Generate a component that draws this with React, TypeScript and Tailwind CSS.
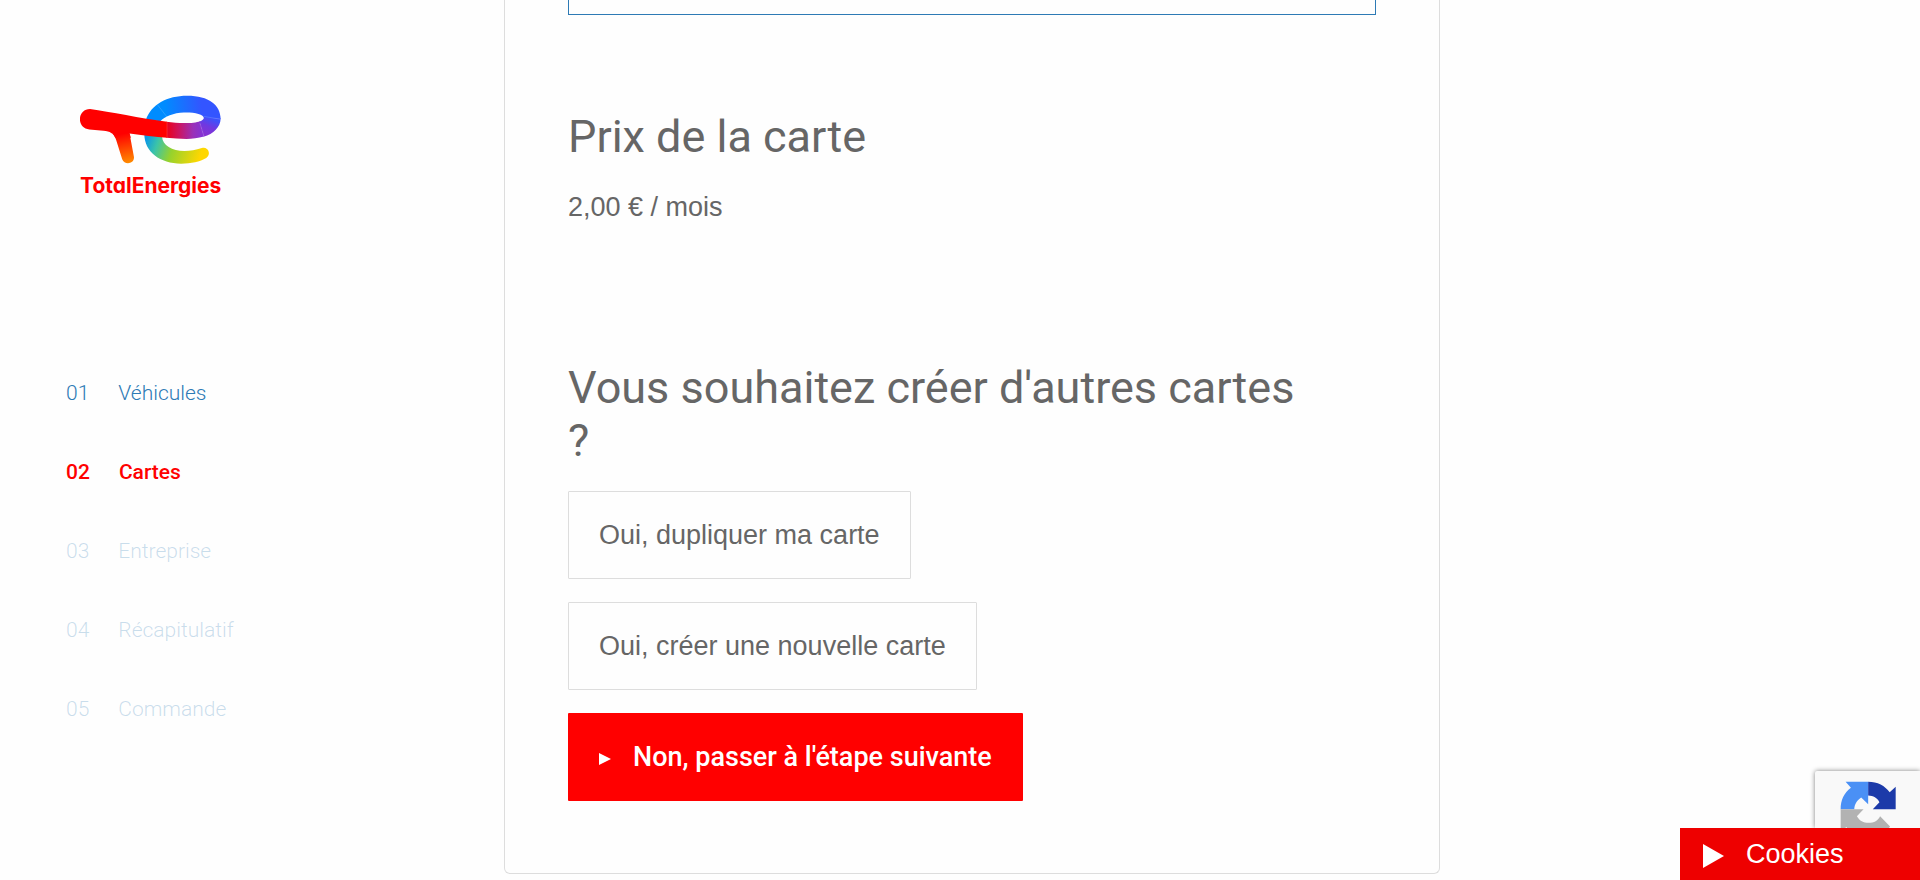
const steps = [
  { number: '01', label: 'Véhicules', state: 'done' },
  { number: '02', label: 'Cartes', state: 'active' },
  { number: '03', label: 'Entreprise', state: 'todo' },
  { number: '04', label: 'Récapitulatif', state: 'todo' },
  { number: '05', label: 'Commande', state: 'todo' },
];

const stepStyles: Record<string, string> = {
  done: 'font-light text-[#2d7ab5]',
  active: 'font-medium text-[#ff0000]',
  todo: 'font-light text-[#2d7ab5]/25',
};

function Logo() {
  return (
    <a href="#accueil" className="block w-[142px] text-[#ff0000]">
      <svg viewBox="60 44 424 206" className="block h-[69px] w-full" aria-hidden="true">
        <defs>
          <linearGradient id="top" gradientUnits="userSpaceOnUse" x1="260" y1="110" x2="480" y2="90">
            <stop offset="0.25" stopColor="#008cff" />
            <stop offset="0.75" stopColor="#3355ff" />
          </linearGradient>
          <linearGradient id="bar" gradientUnits="userSpaceOnUse" x1="318" y1="150" x2="424" y2="150">
            <stop offset="0" stopColor="#ec0018" />
            <stop offset="0.35" stopColor="#cc1560" />
            <stop offset="0.75" stopColor="#9a30b8" />
            <stop offset="1" stopColor="#8533d2" />
          </linearGradient>
          <linearGradient id="tip" gradientUnits="userSpaceOnUse" x1="428" y1="158" x2="448" y2="112">
            <stop offset="0" stopColor="#8533d2" />
            <stop offset="0.5" stopColor="#7038e0" />
            <stop offset="1" stopColor="#3d52fb" />
          </linearGradient>
          <linearGradient id="low" gradientUnits="userSpaceOnUse" x1="258" y1="168" x2="420" y2="225">
            <stop offset="0" stopColor="#0a96e8" />
            <stop offset="0.22" stopColor="#3cc4a8" />
            <stop offset="0.5" stopColor="#96d22d" />
            <stop offset="1" stopColor="#ffd700" />
          </linearGradient>
          <linearGradient id="leg" gradientUnits="userSpaceOnUse" x1="185" y1="160" x2="203" y2="248">
            <stop offset="0" stopColor="#ff0000" />
            <stop offset="1" stopColor="#ff8c00" />
          </linearGradient>
        </defs>
        <path
          fill="url(#low)"
          d="M252 160C252 215 300 249 362 249C392 249 418 243 437 232C453 221 443 197 424 202C405 208 390 211 372 211C335 211 306 195 305 168Z"
        />
        <path
          fill="url(#top)"
          d="M257 118C272 72 320 46 380 46C445 46 480 74 480 116L430 113C430 101 400 95 370 96C340 97 312 108 300 122Z"
        />
        <path
          fill="url(#bar)"
          d="M318 124C358 130 402 129 418 122L430 168C413 173 395 175 378 175C358 175 338 174 318 172Z"
        />
        <path fill="url(#tip)" d="M417 123C425 120 430 116 430 111L480 114C479 140 459 160 429 169Z" />
        <path
          fill="#ff0000"
          d="M90 86C52 86 48 143 88 147L130 151C150 153 160 159 165 172L212 172L208 159C245 164 285 169 320 172V124C240 114 150 94 90 86Z"
        />
        <path
          fill="url(#leg)"
          d="M158 159C162 163 165 170 168 178L186 236C193 255 224 250 221 228L208 159Z"
        />
        <g stroke="#ffffff" strokeOpacity="0.4" strokeWidth="1.2" fill="none">
          <path d="M292 74L320 110" />
          <path d="M430 108L478 116" />
          <path d="M418 128L430 167" />
          <path d="M320 124V171" />
        </g>
      </svg>
      <span className="block font-['Inter',sans-serif] text-[21px] leading-[44px] font-bold [font-feature-settings:'cv11']">
        TotalEnergies
      </span>
    </a>
  );
}

function RecaptchaMark() {
  return (
    <svg viewBox="540 92 170 172" className="block h-[57px] w-[57px]" aria-hidden="true">
      <path fill="#4a90f5" d="M541 177C541 150 551 127 572 112L556 94H624V162L603 142C589 151 583 163 582 177Z" />
      <path fill="#1c3aa9" d="M624 94C652 94 675 106 689 126L707 109V177H638L658 156C651 143 640 137 624 136Z" />
      <path
        fill="#b2b2b2"
        d="M541 177H610L590 198C598 212 610 218 625 218C642 218 654 211 660 198L690 229C676 250 655 262 624 262C594 262 572 250 558 231L541 246Z"
      />
    </svg>
  );
}

const outlineButton =
  'h-22 rounded-[1px] border border-[#dddddd] px-[30px] text-[27px] text-[#666666]';

export default function App() {
  return (
    <div className="flex min-h-screen items-start bg-[#fefefe] font-['Liberation_Sans',Arial,sans-serif] text-[#666666]">
      <aside className="w-[504px] shrink-0 pt-[95px]">
        <div className="pl-20">
          <Logo />
        </div>
        <nav aria-label="Étapes" className="pt-[170px] pl-[66px] font-['Roboto',sans-serif] text-[21px]">
          <ol>
            {steps.map((step) => (
              <li key={step.number} className="h-[79px]">
                <a href={'#etape-' + step.number} className={'flex items-center gap-[29px] ' + stepStyles[step.state]}>
                  <span>{step.number}</span>
                  <span>{step.label}</span>
                </a>
              </li>
            ))}
          </ol>
        </nav>
      </aside>

      <main className="max-w-[936px] flex-1 rounded-b-md border border-t-0 border-[#dddddd] px-[63px] pb-[72px]">
        <div className="h-[15px] border border-t-0 border-[#2d7ab5]" />

        <section className="pt-[95px]">
          <h2 className="font-['Roboto',sans-serif] text-[45px] leading-[53px]">Prix de la carte</h2>
          <p className="pt-6 text-[27px] leading-[40px]">2,00 € / mois</p>
        </section>

        <section className="pt-[134px]">
          <h2 className="max-w-[740px] font-['Roboto',sans-serif] text-[45px] leading-[53px]">
            Vous souhaitez créer d'autres cartes ?
          </h2>
          <div className="flex flex-col items-start gap-[23px] pt-6">
            <button type="button" className={outlineButton}>
              Oui, dupliquer ma carte
            </button>
            <button type="button" className={outlineButton}>
              Oui, créer une nouvelle carte
            </button>
            <button
              type="button"
              className="flex h-22 items-center rounded-[1px] bg-[#ff0000] px-[31px] font-['Roboto',sans-serif] text-[27px] font-medium text-white"
            >
              <svg viewBox="0 0 12 12" className="mt-1 mr-[22px] h-3 w-3 fill-white" aria-hidden="true">
                <path d="M0 0L12 6L0 12Z" />
              </svg>
              Non, passer à l'étape suivante
            </button>
          </div>
        </section>
      </main>

      <div className="fixed right-0 bottom-0 flex flex-col items-end">
        <div className="h-[57px] w-[105px] rounded-tl-xs bg-[#f9f9f9] pt-[10px] pl-[25px] shadow-[0_0_5px_gray]">
          <RecaptchaMark />
        </div>
        <button
          type="button"
          className="relative flex h-13 w-60 items-center bg-[#ee0000] pl-[23px] text-[27px] text-white"
        >
          <svg viewBox="0 0 21 24" className="mt-1 mr-[22px] h-6 w-[21px] fill-white" aria-hidden="true">
            <path d="M0 0L21 12L0 24Z" />
          </svg>
          Cookies
        </button>
      </div>
    </div>
  );
}
